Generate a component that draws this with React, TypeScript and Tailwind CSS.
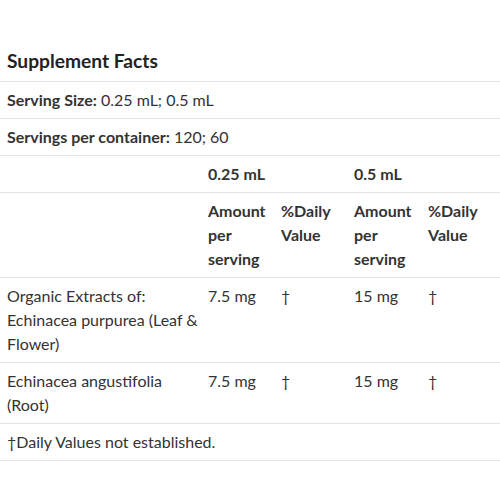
import React from "react";

const rows = [
  {
    name: "Organic Extracts of: Echinacea purpurea (Leaf & Flower)",
    lines: ["Organic Extracts of:", "Echinacea purpurea (Leaf & Flower)"],
    a: "7.5 mg",
    b: "15 mg",
  },
  {
    name: "Echinacea angustifolia (Root)",
    lines: ["Echinacea angustifolia (Root)"],
    a: "7.5 mg",
    b: "15 mg",
  },
];

const App = () => {
  const cell = "pl-[7px] pr-1 py-1.5 align-top";
  const first = "pl-[7px] pr-0 py-1.5 align-top";
  const line = "border-b border-[#e2e2e2]";

  return (
    <div className="w-[500px] h-[500px] bg-white text-[#333] text-[16px] leading-6 font-['Lato','Liberation_Sans',sans-serif]">
      <h2 className={`pt-[49px] pb-[8px] pl-[7px] text-[19.2px] leading-6 font-bold text-[#222] ${line}`}>
        Supplement Facts
      </h2>
      <table className="w-full table-fixed border-collapse">
        <colgroup>
          <col className="w-[201px]" />
          <col className="w-[73px]" />
          <col className="w-[73px]" />
          <col className="w-[74px]" />
          <col />
        </colgroup>
        <tbody>
          <tr className={line}>
            <td colSpan={5} className={cell}>
              <b>Serving Size:</b> 0.25 mL; 0.5 mL
            </td>
          </tr>
          <tr className={line}>
            <td colSpan={5} className={cell}>
              <b>Servings per container:</b> 120; 60
            </td>
          </tr>
          <tr className={line}>
            <td className={first}></td>
            <td colSpan={2} className={`${cell} font-bold`}>
              0.25 mL
            </td>
            <td colSpan={2} className={`${cell} font-bold`}>
              0.5 mL
            </td>
          </tr>
          <tr className={line}>
            <td className={first}></td>
            <td className={`${cell} font-bold`}>Amount per serving</td>
            <td className={`${cell} font-bold`}>%Daily Value</td>
            <td className={`${cell} font-bold`}>Amount per serving</td>
            <td className={`${cell} font-bold`}>%Daily Value</td>
          </tr>
          {rows.map((r) => (
            <tr key={r.name} className={line}>
              <td className={first}>
                {r.lines.map((l, i) => (
                  <React.Fragment key={l}>
                    {i > 0 && <br />}
                    {l}
                  </React.Fragment>
                ))}
              </td>
              <td className={cell}>{r.a}</td>
              <td className={cell}>†</td>
              <td className={cell}>{r.b}</td>
              <td className={cell}>†</td>
            </tr>
          ))}
          <tr className={line}>
            <td colSpan={5} className={cell}>
              †Daily Values not established.
            </td>
          </tr>
        </tbody>
      </table>
    </div>
  );
};

export default App;
